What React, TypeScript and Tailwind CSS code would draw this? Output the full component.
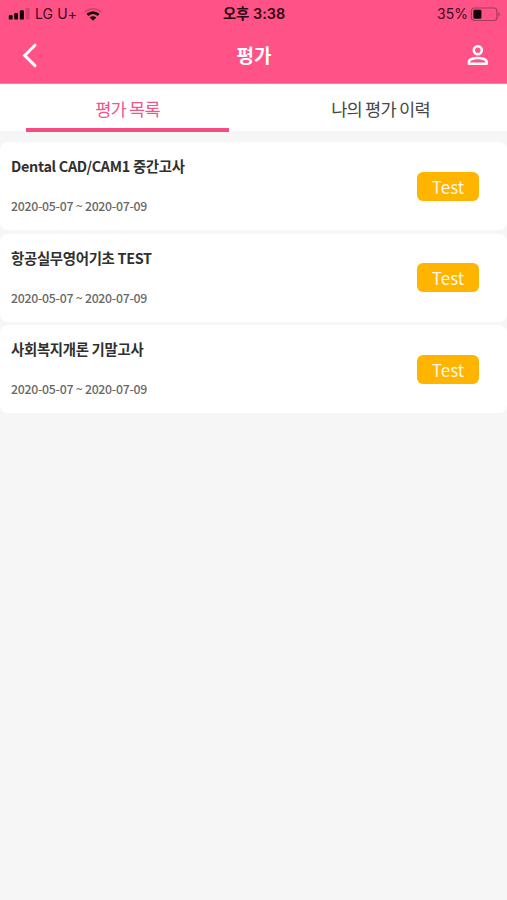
import React, { useState } from 'react';

const tabs = ['평가 목록', '나의 평가 이력'];

const exams = [
  { id: 1, title: 'Dental CAD/CAM1 중간고사', period: '2020-05-07 ~ 2020-07-09' },
  { id: 2, title: '항공실무영어기초 TEST', period: '2020-05-07 ~ 2020-07-09' },
  { id: 3, title: '사회복지개론 기말고사', period: '2020-05-07 ~ 2020-07-09' },
];

function StatusBar() {
  return (
    <div className="grid h-7 grid-cols-3 items-center pl-2 pr-[6px] font-['Inter','Noto_Sans_CJK_KR',sans-serif] text-[14px] leading-7 text-[#3d0c1e]">
      <div className="flex items-center">
        <svg width="22" height="12" viewBox="0 0 22 12" fill="#12040a">
          <rect x="0.8" y="7" width="3.8" height="4.6" rx="1.2" />
          <rect x="6.2" y="5" width="3.8" height="6.6" rx="1.2" />
          <rect x="11.8" y="2.2" width="4.2" height="9.4" rx="1.2" />
          <rect x="17.6" y="0" width="4" height="11.6" rx="1.2" fill="#d8416f" />
        </svg>
        <span className="ml-[5px] tracking-[0.1px]">LG U+</span>
        <svg className="ml-[7px]" width="18" height="13" viewBox="0 0 18 13" fill="none">
          <path d="M1 3.8 Q9 -2.2 17 3.8" stroke="#d8416f" strokeWidth="1.8" />
          <path d="M3.4 6.8 Q9 2.4 14.6 6.8" stroke="#12040a" strokeWidth="2.8" />
          <path d="M9 12.8 L5.7 9.6 Q9 7 12.3 9.6 Z" fill="#12040a" />
        </svg>
      </div>
      <div className="pr-px text-center text-[14.4px] font-semibold text-[#2b0915]">오후 3:38</div>
      <div className="flex items-center justify-end">
        <span>35%</span>
        <svg className="ml-[2px]" width="31" height="15" viewBox="0 0 31 15" fill="none">
          <rect x="1.4" y="1" width="25.5" height="12.5" rx="3" stroke="#a83a5f" strokeWidth="1.2" />
          <rect x="3.4" y="2.8" width="8" height="9" rx="1.4" fill="#12040a" />
          <path d="M28.4 4.8 Q31.4 7.3 28.4 9.8 Z" fill="#a83a5f" />
        </svg>
      </div>
    </div>
  );
}

function Header() {
  return (
    <header className="h-[84px] border-b border-[#ff7ba3] bg-[#ff5286]">
      <StatusBar />
      <div className="grid h-[53px] grid-cols-3 items-center pl-[21px] pr-[18px] text-white">
        <button aria-label="뒤로" className="justify-self-start">
          <svg width="18" height="26" viewBox="0 0 18 26" fill="none" stroke="currentColor" strokeWidth="3" strokeLinecap="round">
            <path d="M14 3.2 L3.7 13.4 L14 23.6" />
          </svg>
        </button>
        <h1 className="pr-[2px] pt-px text-center text-[19px] font-bold leading-[26px]">평가</h1>
        <button aria-label="내 정보" className="justify-self-end">
          <svg width="22" height="22" viewBox="0 0 22 22" fill="none" stroke="currentColor" strokeWidth="2.5">
            <circle cx="10.8" cy="6.2" r="4" />
            <path d="M1.9 19.7 V18 C1.9 15.4 6.6 14 10.8 14 S19.7 15.4 19.7 18 V19.7 Z" strokeLinejoin="round" />
          </svg>
        </button>
      </div>
    </header>
  );
}

export default function App() {
  const [activeTab, setActiveTab] = useState(0);

  return (
    <div className="min-h-screen bg-[#f6f6f6] font-['Noto_Sans_CJK_KR',sans-serif]">
      <Header />

      {/* Tabs */}
      <nav className="grid h-[47px] grid-cols-2 bg-white pl-[1px]">
        {tabs.map((tab, index) => (
          <button
            key={tab}
            onClick={() => setActiveTab(index)}
            className={`
              mx-[25px] h-[47.5px] border-b-4 pt-[5px] text-[17.6px] leading-[39px] tracking-[-0.8px]
              ${activeTab === index ? 'border-[#f54b80] text-[#f2558a]' : 'border-transparent text-[#484848]'}
            `}
          >
            {tab}
          </button>
        ))}
      </nav>

      {/* Exam list */}
      <ul className="flex flex-col gap-[3.7px] pt-[11px]">
        {exams.map((exam) => (
          <li key={exam.id} className="flex h-[88px] items-center justify-between rounded-lg bg-white pl-[11px] pr-7">
            <div>
              <p className="text-[14.4px] font-bold leading-5 tracking-[-0.3px] text-[#303030]">{exam.title}</p>
              <p className="mt-5 text-[12.3px] font-medium leading-5 tracking-[-0.27px] text-[#686868]">{exam.period}</p>
            </div>
            <button className="h-[29px] w-[62px] rounded-md bg-[#ffb400] pt-px text-[17px] leading-[28px] text-[#fff8e6]">
              Test
            </button>
          </li>
        ))}
      </ul>
    </div>
  );
}
